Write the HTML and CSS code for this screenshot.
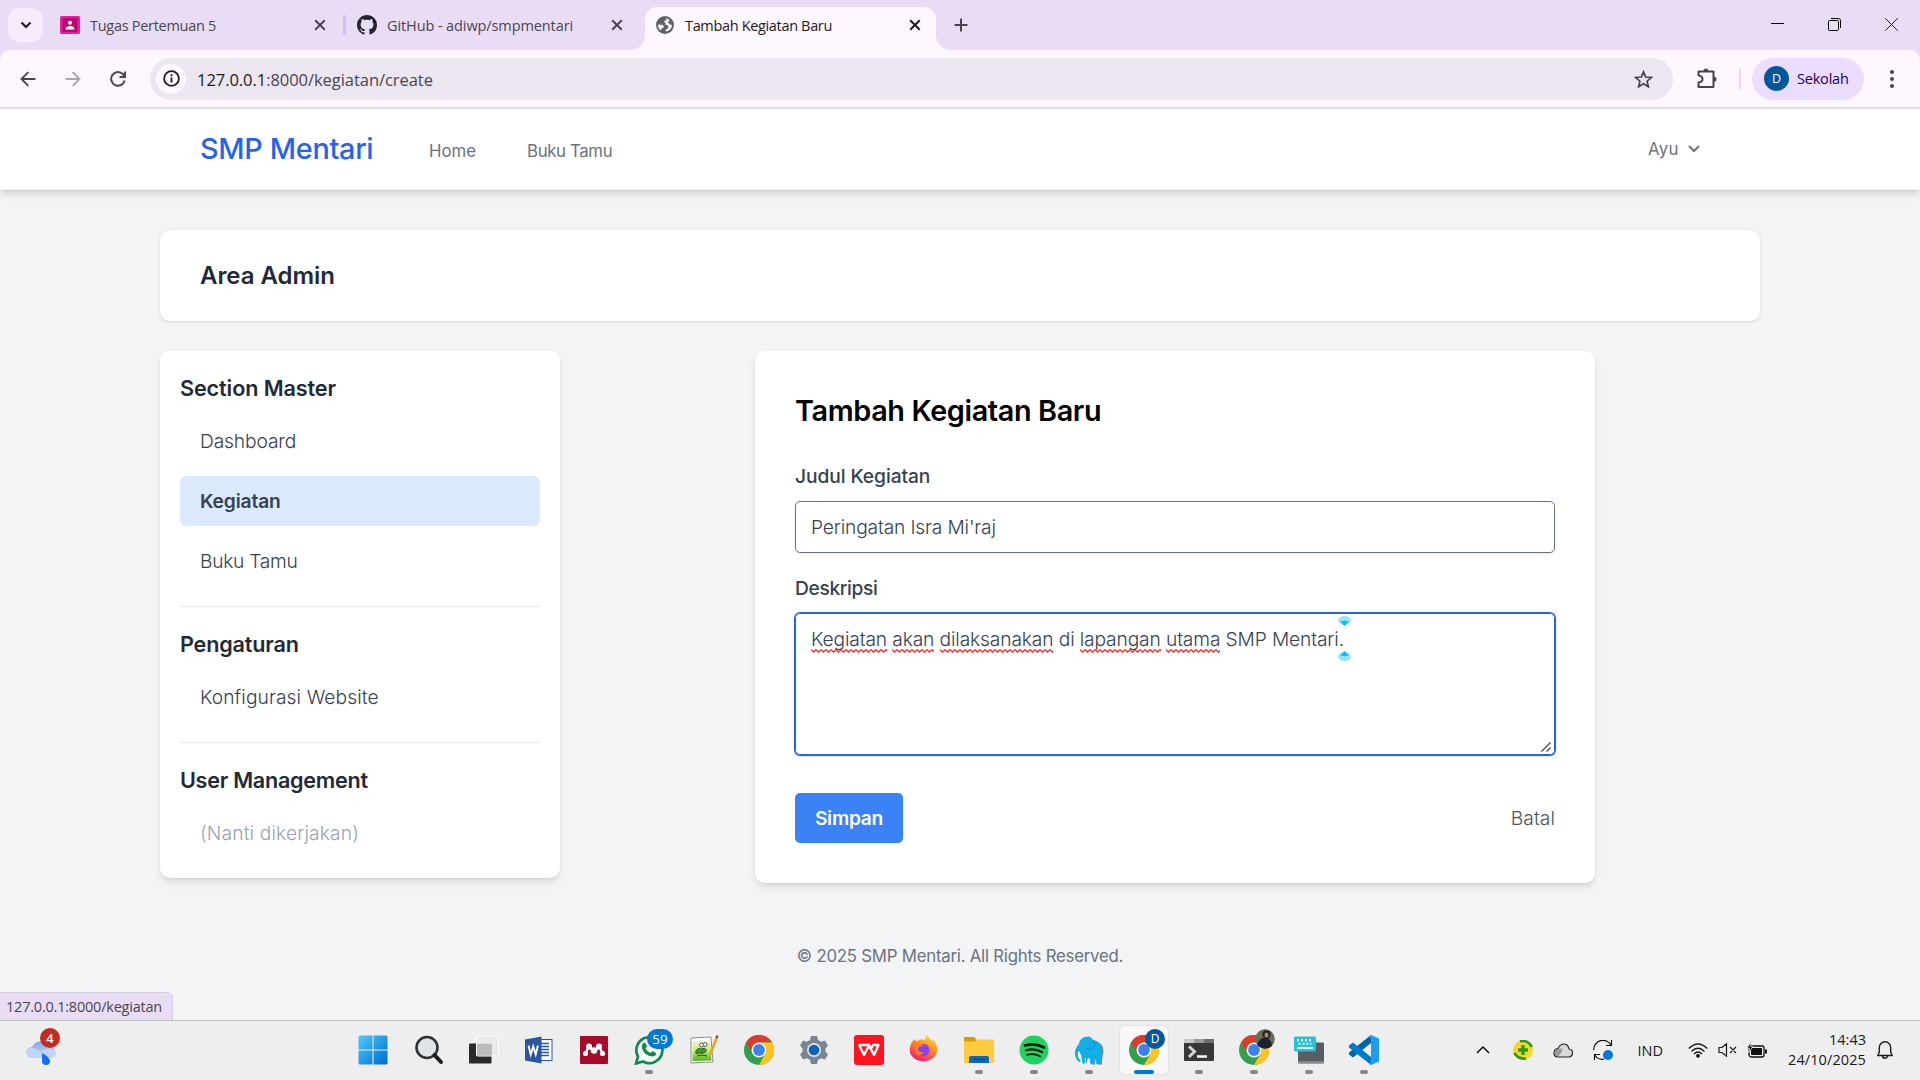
FILE: index.html
```html
<!DOCTYPE html>
<html lang="id">
<head>
<meta charset="utf-8">
<title>Tambah Kegiatan Baru</title>
<link rel="stylesheet" href="styles.css">
</head>
<body>
<svg class="defs" width="0" height="0" aria-hidden="true">
  <defs>
    <symbol id="x" viewBox="0 0 12 12"><path d="M1.2 1.2 10.8 10.8M10.8 1.2 1.2 10.8" fill="none" stroke="currentColor" stroke-width="2"/></symbol>
    <symbol id="chrome" viewBox="0 0 30 30">
      <circle cx="15" cy="15" r="15" fill="#34a04f"/>
      <path d="M2 7.5A15 15 0 0 1 28 7.5H15A7.5 7.5 0 0 0 8.5 18.7Z" fill="#dd3b2e"/>
      <path d="M28 7.5A15 15 0 0 1 15 30L21.5 18.7A7.5 7.5 0 0 0 15 7.5Z" fill="#fcc421"/>
      <circle cx="15" cy="15" r="7.5" fill="#fff"/><circle cx="15" cy="15" r="5.9" fill="#3b82ee"/>
    </symbol>
  </defs>
</svg>

<header class="browser">
  <div class="tabstrip">
    <button class="tab-search"><svg width="12" height="8" viewBox="0 0 12 8"><path d="M1.5 1.5 6 6l4.500-4.500" fill="none" stroke="#1d1b20" stroke-width="2.200"/></svg></button>
    <div class="tab tab-one">
      <svg width="20" height="18" viewBox="0 0 20 18"><rect width="20" height="18" rx="1.500" fill="#e5209b"/><rect x="2.500" y="2" width="15" height="14" fill="#b90777"/><circle cx="10" cy="6.800" r="2" fill="#fff"/><path d="M5.500 13.500q0-3.500 4.500-3.500t4.500 3.500z" fill="#fff"/></svg>
      <span class="tab-title t-tugas">Tugas Pertemuan 5</span>
      <svg class="tab-close" width="12" height="12"><use href="#x"/></svg>
    </div>
    <i class="tab-sep"></i>
    <div class="tab tab-two">
      <svg width="20" height="20" viewBox="0 0 16 16"><path fill="#24222b" d="M8 0C3.580 0 0 3.580 0 8c0 3.540 2.290 6.530 5.470 7.590.4.070.55-.17.55-.38 0-.19-.010-.82-.010-1.490-2.010.37-2.530-.49-2.690-.94-.090-.23-.48-.94-.82-1.130-.28-.15-.68-.52-.010-.53.63-.010 1.080.58 1.230.82.72 1.210 1.870.87 2.330.66.070-.52.280-.87.510-1.070-1.780-.2-3.640-.89-3.640-3.950 0-.87.31-1.590.82-2.150-.080-.2-.36-1.020.080-2.120 0 0 .67-.21 2.200.82.640-.18 1.320-.27 2-.27s1.360.090 2 .27c1.530-1.040 2.200-.82 2.200-.82.440 1.100.160 1.920.080 2.120.510.560.820 1.270.820 2.150 0 3.070-1.870 3.750-3.650 3.950.290.250.540.730.540 1.480 0 1.070-.010 1.930-.010 2.200 0 .210.150.460.550.380A8.010 8.010 0 0 0 16 8c0-4.420-3.580-8-8-8z"/></svg>
      <span class="tab-title t-git">GitHub - adiwp/smpmentari</span>
      <svg class="tab-close" width="12" height="12"><use href="#x"/></svg>
    </div>
    <div class="tab tab-active">
      <svg width="18" height="18" viewBox="0 0 18 18"><circle cx="9" cy="9" r="9" fill="#5f6368"/><path d="M9 2.200c2 0 2 1.800.5 2.200S7.800 5.600 9 6.600s.5 2-.8 2 4.300-.3 4.300 2.200-3 1.800-3 4.500C11.500 16 16 13 16 9l-2-.5-2-2 1.500-2.500C12 2.500 10.500 2 9 2.200ZM2 8.500l5 .5 1 2.500-2.500.7-.3 2.300C3 13.500 1.800 11 2 8.500Z" fill="#fef7ff"/></svg>
      <span class="tab-title t-active">Tambah Kegiatan Baru</span>
      <svg class="tab-close" width="12" height="12"><use href="#x"/></svg>
    </div>
    <svg class="new-tab" width="14" height="14" viewBox="0 0 14 14"><path d="M7 .5v13M.5 7h13" stroke="#49454f" stroke-width="2"/></svg>
    <div class="window-controls">
      <svg width="13" height="13" viewBox="0 0 13 13"><path d="M0 5.500h13" stroke="#000" stroke-width="1"/></svg>
      <svg width="13" height="13" viewBox="0 0 13 13" fill="none" stroke="#000"><rect x=".5" y="2.500" width="10" height="10" rx="1"/><path d="M3 .5h7.500q2 0 2 2V10"/></svg>
      <svg width="13" height="13" viewBox="0 0 13 13"><path d="M.3.300l12.400 12.400M12.700.300.300 12.700" stroke="#222"/></svg>
    </div>
  </div>
  <div class="toolbar">
    <div class="nav-icons">
      <svg width="16" height="16" viewBox="0 0 16 16" fill="none" stroke="#49454f" stroke-width="1.900"><path d="M15.500 8H1.800M8.300 1.200 1.500 8l6.800 6.800"/></svg>
      <svg width="16" height="16" viewBox="0 0 16 16" fill="none" stroke="#aba6ae" stroke-width="1.900"><path d="M.5 8h13.700M7.700 1.200 14.500 8l-6.800 6.800"/></svg>
      <svg width="16" height="16" viewBox="0 0 16 16" fill="none" stroke="#49454f" stroke-width="2"><path d="M14.600 9.500A6.800 6.800 0 1 1 13 3.300L14.500 5M15 .5V6H9.500"/></svg>
    </div>
    <div class="omnibox">
      <span class="site-info"><svg width="17" height="17" viewBox="0 0 17 17"><circle cx="8.500" cy="8.500" r="7.400" fill="none" stroke="#1d1b20" stroke-width="1.800"/><path d="M8.500 7.500v5M8.500 4.300v1.900" stroke="#1d1b20" stroke-width="1.800"/></svg></span>
      <span class="url"><b>127.0.0.1</b>:8000/kegiatan/create</span>
      <svg class="star" width="19" height="18" viewBox="0 0 19 18"><path d="M9.500 1.800 11.700 7l5.700.5-4.300 3.700 1.300 5.600-4.900-3-4.900 3 1.300-5.600L1.600 7.500 7.300 7Z" fill="none" stroke="#49454f" stroke-width="1.700"/></svg>
    </div>
    <svg class="puzzle" width="21" height="21" viewBox="0 0 21 21"><path d="M1.500 3.500h15v15.500h-15v-4.500q4-.5 4-3.500t-4-3.500z" fill="none" stroke="#49454f" stroke-width="2" stroke-linejoin="round"/><path d="M6.500 3a2.500 2.500 0 0 1 5 0zM17 8.700a2.500 2.500 0 0 1 0 5z" fill="#49454f"/></svg>
    <i class="toolbar-sep"></i>
    <div class="profile"><span class="avatar">D</span><span class="t-sekolah">Sekolah</span></div>
    <svg class="dots" width="4" height="18" viewBox="0 0 4 18" fill="#49454f"><circle cx="2" cy="2" r="2"/><circle cx="2" cy="9" r="2"/><circle cx="2" cy="16" r="2"/></svg>
  </div>
</header>

<div class="page">
  <nav class="site-nav">
    <a class="brand">SMP Mentari</a>
    <a class="nav-link l-home">Home</a>
    <a class="nav-link l-buku">Buku Tamu</a>
    <a class="user"><span class="t-ayu">Ayu</span><svg width="12" height="8" viewBox="0 0 12 8"><path d="M1.500 1.500 6 6l4.500-4.500" fill="none" stroke="#6b7280" stroke-width="2" stroke-linecap="round"/></svg></a>
  </nav>
  <main class="container">
    <section class="card area"><h1 class="t-area">Area Admin</h1></section>
    <div class="columns">
      <aside class="card sidebar">
        <h2 class="t-section">Section Master</h2>
        <a class="t-dash">Dashboard</a>
        <a class="active t-keg">Kegiatan</a>
        <a class="t-bt">Buku Tamu</a>
        <hr>
        <h2 class="t-peng">Pengaturan</h2>
        <a class="t-konf">Konfigurasi Website</a>
        <hr>
        <h2 class="t-user">User Management</h2>
        <a class="muted t-nanti">(Nanti dikerjakan)</a>
      </aside>
      <form class="card form">
        <h2><span class="t-form">Tambah Kegiatan Baru</span></h2>
        <label><span class="t-judul">Judul Kegiatan</span></label>
        <div class="field"><span class="t-pering">Peringatan Isra Mi'raj</span></div>
        <label><span class="t-desk">Deskripsi</span></label>
        <div class="field area-field"><span class="t-text"><u>Kegiatan</u> <u>akan</u> <u>dilaksanakan</u> di <u>lapangan</u> <u>utama</u> SMP Mentari.</span><span class="caret"><svg width="13" height="46" viewBox="0 0 13 46"><ellipse cx="6.500" cy="4.500" rx="6.500" ry="4.500" fill="#99e3fb"/><path d="M2.500 5.500q4-1.500 8 0L6.500 10z" fill="#00bdfb"/><ellipse cx="6.500" cy="40.500" rx="6.500" ry="4.500" fill="#99e3fb"/><path d="M2.500 39.500q4 1.500 8 0L6.500 35z" fill="#00bdfb"/></svg></span>
          <svg class="grip" width="10" height="10" viewBox="0 0 10 10"><path d="M.5 9.500l9-9M5.500 9.500l4-4" stroke="#444" stroke-width="1.200" fill="none"/></svg>
        </div>
        <div class="actions"><button type="button" class="save"><span class="t-simpan">Simpan</span></button><a class="t-batal">Batal</a></div>
      </form>
    </div>
  </main>
  <footer><span class="t-foot">© 2025 SMP Mentari. All Rights Reserved.</span></footer>
  <div class="status"><span class="t-status">127.0.0.1:8000/kegiatan</span></div>
</div>

<div class="taskbar">
  <div class="weather"><svg width="30" height="26" viewBox="0 0 30 26"><defs><linearGradient id="cl" x2="0" y2="1"><stop stop-color="#86a9e6"/><stop offset="1" stop-color="#c3d8f8"/></linearGradient></defs><path d="M6 18a5.500 5.500 0 0 1 0-11A9 9 0 0 1 22 6a6 6 0 0 1 2 12z" fill="url(#cl)"/><path d="M0 13q1-5 6-5 5 0 8 4 9-7 16 0 0 6-6 6H6q-5 0-6-5z" fill="#bfd5f8"/><path d="M16.200 13Q24 17.500 24 21a4 4 0 0 1-8 0q0-4 .2-8z" fill="#0f6efa"/></svg><span class="wbadge">4</span></div>
  <div class="apps">
    <span class="app start"><svg width="30" height="30" viewBox="0 0 30 30"><defs><linearGradient id="wn" x2="1" y2="1"><stop stop-color="#4ccdfe"/><stop offset="1" stop-color="#0069cc"/></linearGradient></defs><rect x=".5" y=".5" width="29" height="29" rx="1.500" fill="url(#wn)"/><path d="M15 0v30M0 15h30" stroke="#eee"/></svg></span>
    <span class="app"><svg width="30" height="30" viewBox="0 0 30 30"><circle cx="13" cy="12.500" r="10.500" fill="#e0e3e6" stroke="#303132" stroke-width="2.600"/><path d="m20.500 20 6.500 7" stroke="#1d1d1e" stroke-width="4" stroke-linecap="round"/></svg></span>
    <span class="app"><svg width="30" height="30" viewBox="0 0 30 30"><rect y="8.500" width="22.500" height="20" rx="1" fill="#2b2a29"/><rect x="7.500" y="1" width="22" height="20" rx="1" fill="#e9e9e9" fill-opacity=".88" stroke="#fff"/><path d="M8 9h15v12H8z" fill="#aaa" fill-opacity=".55"/></svg></span>
    <span class="app"><svg width="28" height="28" viewBox="0 0 28 28"><rect x="14" y="3.500" width="13" height="21" fill="#fff" stroke="#2b579a"/><path d="M16 7.500h8M16 10.500h8M16 13.500h8M16 16.500h8M16 19.500h8" stroke="#2b579a" stroke-width="1.400"/><path d="M0 3.500 16.500.5v27L0 24.500z" fill="#2b579a"/><path d="m3.500 9.500 2.200 9 2.500-8 2.500 8 2.200-9" fill="none" stroke="#fff" stroke-width="1.900"/></svg></span>
    <span class="app"><svg width="28" height="28" viewBox="0 0 28 28"><rect width="28" height="28" rx="1" fill="#a60b2b"/><path d="M5.500 17 9 10.500l5 5 5-5 3.500 6.500" stroke="#fff" stroke-width="2.500" fill="none"/><g fill="#fff"><circle cx="9" cy="10.500" r="3"/><circle cx="19" cy="10.500" r="3"/><circle cx="14" cy="14.500" r="3.300"/><circle cx="5.500" cy="17.500" r="2.600"/><circle cx="22.500" cy="17.500" r="2.600"/></g></svg></span>
    <span class="app run"><svg width="30" height="30" viewBox="0 0 30 30"><path d="M2 28.500 4 21.500a13 13 0 1 1 5 5z" fill="#f3f8f5" stroke="#158654" stroke-width="2.700"/><path d="M8.500 9q2-3 3.500 0l1 2.500-1.500 2q1.500 3 5 4.500l2-2 3.500 2q.5 3-3.500 3.500-8-.5-10.500-8-.5-3 .5-4.500Z" fill="#158654"/></svg><span class="badge wa">59</span></span>
    <span class="app"><svg width="30" height="30" viewBox="0 0 30 30"><defs><linearGradient id="np" x2="0" y2="1"><stop stop-color="#eef3df"/><stop offset=".5" stop-color="#cfe96b"/><stop offset="1" stop-color="#45b31c"/></linearGradient></defs><path d="m2 3 20-1 2 25-22 1z" fill="#fff" stroke="#8c8c8c"/><path d="m3.500 6 18-.5 1 20-19 .5z" fill="url(#np)"/><path d="M6.500 17q2-5 6-3 3-2 5 1-1 4-6 3-4 2-5-1z" fill="#3a9b25" stroke="#1c4a16" stroke-width=".8"/><path d="M8 21q5-2 10 0" stroke="#1c4a16" fill="none"/><circle cx="12.500" cy="10" r="2" fill="#fff" stroke="#333" stroke-width=".8"/><circle cx="16" cy="9.500" r="2" fill="#fff" stroke="#333" stroke-width=".8"/><path d="M21 20 28 2" stroke="#e3a52d" stroke-width="2.500"/><path d="m27.500 3 1-2.500" stroke="#a14b42" stroke-width="2.500"/></svg></span>
    <span class="app"><svg width="30" height="30"><use href="#chrome"/></svg></span>
    <span class="app"><svg width="30" height="30" viewBox="0 0 30 30"><path d="m12 1h6l1 4 3 1.700 4-1.200 3 5-2.500 3v3l2.500 3-3 5-4-1.200-3 1.700-1 4h-6l-1-4-3-1.700-4 1.200-3-5 2.500-3v-3L1 10.500l3-5 4 1.200L11 5z" fill="#798692"/><circle cx="15" cy="15" r="7" fill="#dfe5ea"/><circle cx="15" cy="15" r="5.300" fill="#0c63b7"/></svg></span>
    <span class="app"><svg width="30" height="30" viewBox="0 0 30 30"><rect width="30" height="30" rx="3" fill="#ff1420"/><path d="M4.500 10H16M5 10l5 10 5-9.500L20 20l4.500-10H19l-1.500 3" fill="none" stroke="#fff" stroke-width="2.400" stroke-linejoin="round"/></svg></span>
    <span class="app"><svg width="30" height="30" viewBox="0 0 30 30"><defs><linearGradient id="ff" x1=".8" x2=".3" y2="1"><stop stop-color="#ffe640"/><stop offset=".45" stop-color="#ff8a1f"/><stop offset="1" stop-color="#f3157a"/></linearGradient></defs><path d="M3 7 5 4q1 2 3 2 4-3 8-1 0-3 2-5 2 4 6 6v-2q5 6 4 13a14 12 0 0 1-27 1Q0 12 3 7z" fill="url(#ff)"/><circle cx="14.500" cy="15" r="6" fill="#8a3ff0"/><path d="M5 9q7-1 10 2-5 0-6 3 0 4 6 3-3 5-8 2z" fill="#ff7c22"/></svg></span>
    <span class="app run"><svg width="30" height="30" viewBox="0 0 30 30"><path d="M0 3q0-1 1-1h9l3 3v4H0z" fill="#d99a08"/><path d="M0 6.500h11l2-2h17V28H0z" fill="#fdcb3d"/><path d="M5 28v-5q0-2 2-2h16q2 0 2 2v5z" fill="#0d68c0"/><path d="M9 24.500h12" stroke="#063f7d" stroke-width="1.500"/></svg></span>
    <span class="app run"><svg width="30" height="30" viewBox="0 0 30 30"><circle cx="15" cy="15" r="14.500" fill="#1fd35f"/><g fill="none" stroke="#08150c" stroke-linecap="round"><path d="M6 10.500q10-3 19 2" stroke-width="2.600"/><path d="M7 15.300q8.500-2.300 16 1.700" stroke-width="2.200"/><path d="M8 19.800q7-1.800 13 1.500" stroke-width="1.800"/></g></svg></span>
    <span class="app run"><svg width="30" height="30" viewBox="0 0 30 30"><path d="M12 29.500V23h5v6.500h4V23l2 6.500h5q0-8 1.500-12Q30 8 20 5z" fill="#0e5f8a" opacity=".65"/><path d="M11 28.500V23q2.500 1 5 0v5.500h4.500V22l2 6.500h4q0-6 1.500-9Q29 8 19 5 17 0 11 2 5 4 5 9 1 13 1 18q0 6 4 9l2-1-2-5 2-2 1.500 9.500z" fill="#11aee8"/><path d="M6 16.500 4 17q-1 6 3 9z" fill="#fff"/><path d="M19 5q4 5-1 9-4 1-6-1" fill="none" stroke="#0b93cf"/></svg></span>
    <span class="app run current"><svg width="30" height="30"><use href="#chrome"/></svg><span class="badge d">D</span></span>
    <span class="app run"><svg width="30" height="30" viewBox="0 0 30 30"><rect y="4" width="30" height="22" rx="1" fill="#383838"/><path d="M0 8V5q0-1 1-1h9v4z" fill="#c9c9c9"/><path d="M10 4h10v4H10z" fill="#9a9a9a"/><path d="M20 4h9q1 0 1 1v3H20z" fill="#6f6f6f"/><path d="m5 11.500 5.500 5L5 22" fill="none" stroke="#d6d6d6" stroke-width="3"/><path d="M13 21.500h10" stroke="#fff" stroke-width="2.500"/></svg></span>
    <span class="app run"><svg width="30" height="30"><use href="#chrome"/></svg><svg class="badge photo" width="20" height="20" viewBox="0 0 20 20"><circle cx="10" cy="10" r="10" fill="#64704f"/><path d="M2 16q2-6 6-7h5q4 3 4 8-7 6-15-1z" fill="#1b2034"/><circle cx="11.500" cy="5.500" r="4.200" fill="#27242b"/><ellipse cx="11.500" cy="6" rx="2" ry="2.600" fill="#b0846d"/></svg></span>
    <span class="app run"><svg width="30" height="30" viewBox="0 0 30 30"><rect x="4" y="7.500" width="26" height="21" rx="1" fill="#575d63"/><path d="M4 26h26v2H4z" fill="#85898d"/><rect y="1.500" width="22" height="15" rx="1.500" fill="#29c0d6"/><path d="M3 5.200h16M4.500 8.700h13" stroke="#fff" stroke-width="2" stroke-dasharray="2 2"/><path d="M3 13h16" stroke="#fff" stroke-width="1.800"/></svg></span>
    <span class="app run"><svg width="30" height="30" viewBox="0 0 30 30"><path d="M22 0 22 8 4 22.500 0 19.500v-2z" fill="#0065a9"/><path d="M22 30v-8L4 7.500 0 10.500v2z" fill="#007acc"/><path d="M22 0l8 3.500v23L22 30q-1 0-1.500-1L22 26V4l-1.500-3z" fill="#1f9cf0"/></svg></span>
  </div>
  <div class="tray">
    <svg class="tr-up" width="14" height="8" viewBox="0 0 14 8"><path d="m1 7 6-6 6 6" fill="none" stroke="#111" stroke-width="1.500"/></svg>
    <svg class="tr-360" width="20" height="20" viewBox="0 0 20 20"><circle cx="10" cy="10" r="10" fill="#fbd822"/><path d="M7 1.200Q15-.5 18.800 7M1.300 13Q5 19 13 18.800" fill="none" stroke="#2c9a2b" stroke-width="2.600"/><path d="M10 5v10M5 10h10" stroke="#2e9a2c" stroke-width="3.500"/></svg>
    <svg class="tr-cloud" width="20" height="15" viewBox="0 0 20 15"><path d="M5 14Q1 14 1 10t4-4.500Q7 1 11 1t5 5q3.500.5 3.500 4T16 14z" fill="#d8d8d8" stroke="#222" stroke-width="1.200"/><path d="M5 13.400Q1.600 13.400 1.600 10T5 6q3-1 4.500 0 0 3-4.500 7.400z" fill="#999"/></svg>
    <svg class="tr-sync" width="20" height="20" viewBox="0 0 20 20"><g fill="none" stroke="#111" stroke-width="1.200"><path d="M.8 10A9.200 9.200 0 0 1 18 5M18.500 0v5.500H13M1.500 20v-5.500H7M1.500 14.500A9.200 9.200 0 0 0 11 19.200"/></g><circle cx="15" cy="15" r="5" fill="#0078d7"/></svg>
    <span class="t-ind">IND</span>
    <svg class="tr-wifi" width="20" height="15" viewBox="0 0 20 15"><g fill="none" stroke="#1a1a1a" stroke-width="1.300"><path d="M.7 5.500Q10-3.500 19.300 5.500"/><path d="M3.500 8.500q6.500-6.500 13 0"/><path d="M6 11q4-4 8 0"/></g><circle cx="10" cy="12.800" r="1.900" fill="#111"/></svg>
    <svg class="tr-vol" width="19" height="14" viewBox="0 0 19 14"><path d="M1 4.500h3L8.500.8v12.400L4 9.500H1zM12 4l6 6M18 4l-6 6" fill="none" stroke="#1a1a1a" stroke-width="1.200"/></svg>
    <svg class="tr-bat" width="20" height="16" viewBox="0 0 20 16"><rect x="2" y="4" width="15" height="11" rx="2" fill="#eee" stroke="#111" stroke-width="1.300"/><rect x="4" y="6" width="11" height="7" rx=".5" fill="#111"/><path d="M18 7.500h2v4h-2z" fill="#111"/><path d="M4 0 0 6h2.500L1.500 10.500 6 4.500H3.500z" fill="#111" stroke="#eee" stroke-width=".7"/></svg>
    <div class="clock"><span class="t-time">14:43</span><span class="t-date">24/10/2025</span></div>
    <svg class="tr-bell" width="16" height="18" viewBox="0 0 16 18"><path d="M.8 14.500 2.300 11V6.500a5.700 5.700 0 0 1 11.400 0V11l1.500 3.500zM5.500 14.800a2.500 2.500 0 0 0 5 0" fill="none" stroke="#1a1a1a" stroke-width="1.400" stroke-linejoin="round"/></svg>
  </div>
</div>
</body>
</html>
```
FILE: styles.css
```css
* { box-sizing: border-box; }
body { margin: 0; width: 1920px; height: 1080px; overflow: hidden; display: flex; flex-direction: column; font-family: Inter, sans-serif; }
.defs { position: absolute; }
svg { display: block; flex: none; }
h1, h2 { margin: 0; }
span, a { white-space: nowrap; }

/* browser chrome */
.browser { height: 109px; background: #e9ddf6; border-bottom: 2px solid #e4dde9; font-family: "Open Sans", sans-serif; }
.tabstrip { display: flex; height: 50px; }
.tab-search { width: 35px; height: 34px; margin: 8px 0 0 8px; padding: 0; border: 0; border-radius: 12px; background: #f7ebfe; display: flex; align-items: center; justify-content: center; }
.tab { display: flex; align-items: center; color: #49454f; font-size: 14.500px; }
.tab-one { width: 283px; margin-left: 17px; }
.tab-two { width: 268px; margin-left: 11px; }
.tab-title { margin-left: 10px; }
.tab-close { margin-left: auto; }
.tab-one .tab-close { margin-right: 17px; }
.tab-two .tab-close { margin-right: 2px; }
.tab-sep { width: 3px; height: 20px; margin-top: 15px; border-radius: 2px; background: #d3bcfd; }
.tab-active { position: relative; width: 291px; height: 43px; margin: 7px 0 0 20px; padding: 0 15px 7px 11px; border-radius: 12px 12px 0 0; background: #fef7ff; color: #1d1b20; }
.tab-active::before, .tab-active::after { content: ""; position: absolute; bottom: 0; width: 14px; height: 14px; }
.tab-active::before { left: -14px; background: radial-gradient(circle at 0 0, transparent 13.500px, #fef7ff 14px); }
.tab-active::after { right: -14px; background: radial-gradient(circle at 100% 0, transparent 13.500px, #fef7ff 14px); }
.tab-active .tab-title { margin-left: 11px; }
.new-tab { margin: 18px 0 0 18px; }
.window-controls { display: flex; gap: 44px; margin: 18px 22px 0 auto; }
.toolbar { display: flex; align-items: center; height: 57px; background: #fef7ff; border-radius: 10px 10px 0 0; }
.nav-icons { display: flex; gap: 29px; margin-left: 20px; }
.omnibox { display: flex; align-items: center; width: 1523px; height: 42px; margin-left: 24px; padding-right: 20px; border-radius: 21px; background: #ece6f0; font-size: 16.500px; color: #49454f; }
.site-info { display: flex; align-items: center; justify-content: center; width: 30px; height: 30px; margin-left: 6px; border-radius: 50%; background: #fef7ff; }
.url { margin-left: 11px; padding-top: 2px; }
.url b { font-weight: 400; color: #1d1b20; }
.star { margin-left: auto; }
.puzzle { margin-left: 24px; margin-top: -1px; }
.toolbar-sep { width: 2px; height: 20px; margin-left: 21px; background: #e7dafd; }
.profile { display: flex; align-items: center; width: 112px; height: 42px; margin-left: 11px; border-radius: 21px; background: #eaddff; color: #21005d; font-size: 14.500px; }
.avatar { width: 25px; height: 25px; margin: 0 8px 0 12px; border-radius: 50%; background: #01579b; color: #fff; font-size: 12.500px; line-height: 25px; text-align: center; }
.dots { margin-left: 26px; }

/* site */
.page { position: relative; height: 911px; background: #f3f4f6; display: flex; flex-direction: column; }
.site-nav { display: flex; align-items: center; height: 81px; padding: 0 160px 0 200px; background: #fff; border-bottom: 1px solid #f3f4f6; box-shadow: 0 5px 8px -1px rgba(0,0,0,.12), 0 2px 5px -2px rgba(0,0,0,.12); color: #6b7280; font-size: 16.800px; }
.brand { width: 229px; padding-bottom: 2px; color: #2563eb; font-size: 28.800px; font-weight: 550; }
.nav-link { width: 98px; padding-top: 4px; font-weight: 400; }
.user { display: flex; align-items: center; gap: 9px; width: 112px; margin-left: auto; }
.container { width: 1600px; margin: 40px auto 0; }
.card { background: #fff; border-radius: 10px; box-shadow: 0 5px 8px -1px rgba(0,0,0,.1), 0 2px 5px -2px rgba(0,0,0,.1); }
.area { display: flex; align-items: center; height: 91px; padding-left: 40px; box-shadow: 0 1px 4px rgba(0,0,0,.1), 0 1px 2px -1px rgba(0,0,0,.1); }
.area h1 { color: #1f2937; font-size: 24px; font-weight: 570; }
.columns { display: flex; align-items: flex-start; gap: 195px; margin-top: 30px; }
.sidebar { display: flex; flex-direction: column; width: 400px; padding: 20px; }
.sidebar h2 { margin-bottom: 10px; color: #1f2937; font-size: 21.600px; font-weight: 570; line-height: 35px; }
.sidebar a { padding: 10px 20px; border-radius: 6px; color: #374151; font-size: 19.200px; font-weight: 350; line-height: 30px; }
.sidebar a + a { margin-top: 10px; }
.sidebar .active { background: #dbeafe; font-weight: 600; }
.sidebar .muted { color: #9ca3af; }
.sidebar hr { width: 100%; height: 1px; margin: 20px 0; border: 0; background: #e5e7eb; }
.form { width: 840px; height: 532px; padding: 40px; display: flex; flex-direction: column; }
.form h2 { margin-bottom: 30px; color: #000; font-size: 28.800px; font-weight: 570; line-height: 40px; }
.form label { margin-bottom: 10px; color: #374151; font-size: 19.200px; font-weight: 500; line-height: 30px; }
.field { height: 52px; margin-bottom: 20px; padding: 10px 15px; border: 1px solid #6b7280; border-radius: 5px; color: #374151; font-size: 19.200px; font-weight: 350; line-height: 30px; box-shadow: 0 1px 3px rgba(0,0,0,.1); }
.area-field { position: relative; height: 142px; margin-bottom: 38px; border-color: #2563eb; box-shadow: 0 0 0 1px #2563eb, 0 1px 3px 1px rgba(0,0,0,.1); }
.area-field u { padding-bottom: 2px; text-decoration: none; background: url("data:image/svg+xml,%3Csvg xmlns='http://www.w3.org/2000/svg' width='5' height='4'%3E%3Cpath d='M-.5 0 2.500 3.200 5.500 0' fill='none' stroke='%23ff2a2a' stroke-width='1.200'/%3E%3C/svg%3E") repeat-x left bottom; }
.caret { position: absolute; left: 542px; top: 2px; }
.grip { position: absolute; right: 3px; bottom: 2px; }
.actions { display: flex; align-items: center; justify-content: space-between; color: #4b5563; font-size: 19.200px; font-weight: 350; }
.save { width: 108px; height: 50px; padding: 0; border: 0; border-radius: 5px; background: #3b82f6; color: #fff; font: 600 19.200px Inter, sans-serif; }
footer { margin-top: 61px; color: #6b7280; font-size: 16.800px; line-height: 24px; text-align: center; }
.status { position: absolute; left: 0; bottom: 0; width: 173px; height: 28px; padding-left: 6px; border: solid #d3d0da; border-width: 1px 1px 0 0; border-radius: 0 6px 0 0; background: #e9ddf6; color: #49454f; font: 14.500px/27px "Open Sans", sans-serif; }

/* tracking per label */
.t-tugas { letter-spacing: -.29px; }
.t-git { letter-spacing: -.1px; }
.t-active { letter-spacing: -.34px; }
.url { letter-spacing: -.05px; }
.t-sekolah { letter-spacing: -.2px; }
.brand { letter-spacing: -.3px; }
.l-buku { letter-spacing: -.35px; }
.t-ayu { letter-spacing: .3px; }
.t-area { letter-spacing: -.05px; }
.t-section { letter-spacing: -.1px; }
.t-dash { letter-spacing: -.13px; }
.t-keg { letter-spacing: -.13px; }
.t-bt { letter-spacing: -.28px; }
.t-peng { letter-spacing: -.18px; }
.t-konf { letter-spacing: .1px; }
.t-user { letter-spacing: -.27px; }
.t-nanti { letter-spacing: .15px; }
.t-form { letter-spacing: -.37px; }
.t-judul { letter-spacing: -.07px; }
.t-pering { letter-spacing: -.15px; }
.t-desk { letter-spacing: -.35px; }
.t-text { letter-spacing: -.13px; }
.t-simpan { letter-spacing: -.25px; }
.t-batal { letter-spacing: .08px; }
.t-foot { letter-spacing: -.226px; }
.t-status { letter-spacing: -.215px; }
.t-date { letter-spacing: .1px; }

/* taskbar */
.taskbar { position: relative; display: flex; height: 60px; border-top: 1px solid #bcbcbd; background: #eee; color: #1a1a1a; font: 14.500px "Open Sans", sans-serif; }
.weather { position: relative; width: 34px; height: 30px; margin: 19px 0 0 26px; }
.wbadge { position: absolute; left: 14px; top: -12px; width: 20px; height: 20px; border-radius: 50%; background: #c42b1c; color: #fff; font-size: 13px; font-weight: 600; line-height: 20px; text-align: center; }
.apps { display: flex; gap: 7px; margin: 5px 0 0 290px; }
.app { position: relative; display: flex; align-items: center; justify-content: center; width: 48px; height: 48px; border-radius: 5px; }
.start { left: -1px; }
.run::after { content: ""; position: absolute; left: 20px; bottom: 0; width: 8px; height: 4px; border-radius: 2px; background: #868686; }
.current { background: #f8f8f8; box-shadow: 0 0 1px 1px #e3e3e3; }
.current::after { left: 14px; width: 20px; background: #0078d4; }
.badge { position: absolute; top: 3px; right: 3px; height: 20px; border-radius: 10px; color: #fff; line-height: 20px; text-align: center; }
.wa { right: 0; width: 26px; background: #0078d4; font-size: 13.500px; }
.d { width: 20px; background: #05579b; font-size: 12px; }
.tray { display: flex; align-items: center; margin-left: auto; padding: 0 27px 1px 0; }
.tr-up { margin-right: 23px; }
.tr-360, .tr-cloud { margin-right: 20px; }
.tr-sync { margin-right: 25px; }
.tr-wifi { margin-left: 25px; }
.tr-vol { margin-left: 10px; }
.tr-bat { margin-left: 10px; margin-right: 21px; }
.clock { display: flex; flex-direction: column; align-items: flex-end; padding-bottom: 1px; line-height: 20px; }
.tr-bell { margin-left: 11px; }
```
